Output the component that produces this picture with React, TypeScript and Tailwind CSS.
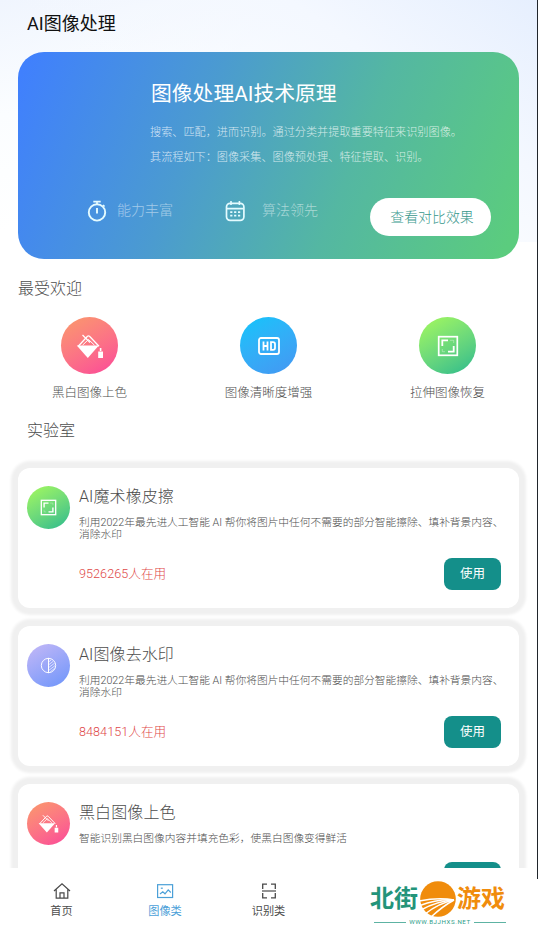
import React from "react";

type IconProps = { className?: string };

const BucketIcon = ({ className }: IconProps) => (
  <svg viewBox="0 0 28 28" className={className} fill="none" stroke="currentColor">
    <path d="M6.5 3L14 10.5" strokeWidth="1.3" />
    <path d="M2 14.5L11.5 4.3Q12.5 3.5 13.5 4.3L23 14.2" strokeWidth="1.3" />
    <path d="M0.8 13.5H22.8L11.8 26Z" fill="currentColor" stroke="none" />
    <path d="M6.5 13.2L12.5 7.5L18.5 13.2" strokeWidth="1" />
    <path d="M22.2 19.5H27V26H22.2ZM23.8 16h1.6v3h-1.6z" fill="currentColor" stroke="none" />
  </svg>
);

const HdIcon = ({ className }: IconProps) => (
  <svg viewBox="0 0 24 20" className={className} fill="none" stroke="currentColor">
    <rect x="2" y="2" width="20" height="16" rx="2" strokeWidth="1.8" />
    <path d="M6.5 5.5V14.5M10.5 5.5V14.5M6.5 10H10.5M14 6.2V13.8H16Q18 13.8 18 12V8Q18 6.2 16 6.2Z" strokeWidth="1.8" />
  </svg>
);

const StretchIcon = ({ className }: IconProps) => (
  <svg viewBox="0 0 22 22" className={className} fill="none" stroke="currentColor">
    <rect x="1.7" y="1.7" width="18.6" height="18.6" strokeWidth="1.7" />
    <path d="M5.3 11V5.3H11" strokeWidth="1.8" />
    <path d="M16.7 11V16.7H11" strokeWidth="1.8" />
    <path d="M13 5.3H16.7V8M5.3 14V16.7H8" strokeWidth="0.7" opacity="0.5" />
  </svg>
);

const HalfCircleIcon = ({ className }: IconProps) => (
  <svg viewBox="0 0 18 18" className={className} fill="none" stroke="currentColor">
    <circle cx="9" cy="9" r="7.6" strokeWidth="1" />
    <path d="M9 1V17" strokeWidth="1.1" />
    <path d="M9.5 5L12 3M9.5 8L14 4.5M9.5 11L15.5 6.5M9.5 14L16 9M11 15.5L15.5 12" strokeWidth="0.9" opacity="0.75" />
  </svg>
);

const StopwatchIcon = ({ className }: IconProps) => (
  <svg viewBox="0 0 20 22" className={className} fill="none" stroke="currentColor">
    <circle cx="10" cy="12.4" r="8.2" strokeWidth="1.9" />
    <path d="M6.3 1.6H13.7M10 8V13.5" strokeWidth="1.9" />
    <path d="M10 2V4.5M16 5L17.6 6.5" strokeWidth="1.6" />
  </svg>
);

const CalendarIcon = ({ className }: IconProps) => (
  <svg viewBox="0 0 20 22" className={className} fill="none" stroke="currentColor">
    <rect x="1.5" y="3.4" width="17.4" height="17" rx="3.6" strokeWidth="1.7" />
    <path d="M2 8.6H18.5M6 1V5M14.4 1V5" strokeWidth="1.6" />
    <path d="M5.2 12.2H15.2M5.2 15.6H15.2" strokeWidth="1.8" strokeDasharray="2.2 1.7" />
  </svg>
);

const HomeIcon = () => (
  <svg viewBox="0 0 18 18" className="size-[18px]" fill="none" stroke="#4a4a4a" strokeWidth="1.2">
    <path d="M1 9L9 1.7L17 9M3.2 7.2V16.2H14.8V7.2" />
    <path d="M7 16V10.8H11V16" />
  </svg>
);

const PictureIcon = () => (
  <svg viewBox="0 0 18 18" className="size-[18px]" fill="none" stroke="#4ba0d8" strokeWidth="1.2">
    <rect x="1.6" y="2.7" width="15" height="12.8" />
    <path d="M4 12L6.8 9.8L9 11.8L12.2 7.8L14.8 10.5" />
    <path d="M4.8 6.2H6.8" />
  </svg>
);

const ScanIcon = () => (
  <svg viewBox="0 0 18 18" className="size-[18px]" fill="none" stroke="#4a4a4a" strokeWidth="1.3">
    <path d="M7 2.2H2.7V7M11 2.2H15.3V7M2.7 11V15.8H7M15.3 11V15.8H11" />
    <path d="M2 9H16" strokeWidth="1.2" />
  </svg>
);

const popular = [
  { label: "黑白图像上色", bg: "from-[#fa9a69] to-[#fb4498]", icon: <BucketIcon className="size-7" /> },
  { label: "图像清晰度增强", bg: "from-[#08c5fb] to-[#4396f2]", icon: <HdIcon className="ml-[1px] h-5 w-6" /> },
  { label: "拉伸图像恢复", bg: "from-[#a5fa58] to-[#24ba8c]", icon: <StretchIcon className="size-[22px]" /> },
];

const eraseText = "利用2022年最先进人工智能 AI 帮你将图片中任何不需要的部分智能擦除、填补背景内容、消除水印";

const tools = [
  { title: "AI魔术橡皮擦", text: eraseText, users: "9526265人在用", action: "使用", bg: "from-[#a5fa58] to-[#24ba8c]", icon: <StretchIcon className="size-[17px]" /> },
  { title: "AI图像去水印", text: eraseText, users: "8484151人在用", action: "使用", bg: "from-[#c5b8f6] to-[#6c94fa]", icon: <HalfCircleIcon className="size-[17px]" /> },
  { title: "黑白图像上色", text: "智能识别黑白图像内容并填充色彩，使黑白图像变得鲜活", users: "", action: "", bg: "from-[#fa9a69] to-[#fb4498]", icon: <BucketIcon className="size-[21px]" /> },
];

const Watermark = () => (
  <div className="absolute left-[370px] top-[12px] w-[140px]">
    <div className="flex h-[38px] items-center whitespace-nowrap text-[24px] font-bold leading-[38px]">
      <span className="w-[49px] text-[#23947a]">北街</span>
      <svg viewBox="0 0 38 38" className="size-[38px] shrink-0">
        <circle cx="19" cy="19" r="17.8" fill="#f08c0c" />
        <g stroke="#fff" strokeWidth="1.5" fill="none">
          <path d="M0 21Q20 17 35 20" />
          <path d="M1 25.5Q18 19 35 20" />
          <path d="M2 30Q18 21 35 20" />
          <path d="M6 34Q20 23 35 20" />
          <path d="M12 37Q24 26 35 20" />
        </g>
      </svg>
      <span className="w-[49px] text-[#f08c0c]">游戏</span>
    </div>
    <div className="flex h-[9px] items-center gap-[3px] pl-1 pr-1">
      <span className="h-px flex-1 bg-[#5db3a3]" />
      <span className="text-[6.2px] leading-[9px] tracking-[0.55px] text-[#2f9d88]">WWW.BJJHXS.NET</span>
      <span className="h-px flex-1 bg-[#5db3a3]" />
    </div>
  </div>
);

export default function App() {
  return (
    <div className="flex h-[929px] w-[538px] flex-col overflow-hidden bg-white font-[Roboto,'Noto_Sans_CJK_SC',sans-serif] text-[#4d4d4d]">
      <div className="relative h-[868px] shrink-0 overflow-hidden bg-white">
        <div className="bg-[linear-gradient(165deg,#f0f5fe_0%,#fbfdff_30%,#ffffff_60%)]">
          <div className="h-[242px] bg-[linear-gradient(215deg,#e6effe_0%,#f4f8ff_28%,#ffffff00_60%)]">
            <header className="flex h-[52.4px] items-center pb-[5px] pl-[27px] text-[18px] text-[#111]">AI图像处理</header>
            <section className="mx-[18px] mr-[19px] h-[207px] rounded-[26px] bg-[linear-gradient(112deg,#4080fd_2%,#4b9bd0_36%,#54b7a2_65%,#5bcc7e_97%)] text-white">
              <div className="h-[67px] pl-[133px] pt-[26.6px] text-[20.8px] leading-[30px]">图像处理AI技术原理</div>
              <div className="pl-[132px] pt-[0.6px] text-[11.15px] font-light leading-[25px] text-white/75">
                <p>搜索、匹配，进而识别。通过分类并提取重要特征来识别图像。</p>
                <p>其流程如下：图像采集、图像预处理、特征提取、识别。</p>
              </div>
              <div className="flex pl-[69px] pt-[28px]">
                <div className="flex h-[26px] w-[138px] items-center text-[14px] font-light">
                  <StopwatchIcon className="mr-[10px] h-[22px] w-5 text-[#e4fbff]" />
                  <span className="text-white/50">能力丰富</span>
                </div>
                <div className="flex h-[26px] w-[145px] items-center text-[14px] font-light">
                  <CalendarIcon className="mr-[17px] h-[22px] w-5 text-[#e4fbff]" />
                  <span className="text-white/50">算法领先</span>
                </div>
                <button className="h-[38px] w-[121px] rounded-full bg-white pl-[3px] pt-[1px] text-[13.9px] font-light text-[#38988c]">查看对比效果</button>
              </div>
            </section>
          </div>
        </div>

        <h2 className="mt-[35px] pl-[18px] text-[16px] font-light leading-[24px]">最受欢迎</h2>
        <div className="mt-[16.4px] grid w-[537px] grid-cols-3">
          {popular.map((p) => (
            <div key={p.label} className="flex flex-col items-center">
              <div className={`flex size-[57px] items-center justify-center rounded-full bg-linear-150 text-white ${p.bg}`}>{p.icon}</div>
              <span className="mt-[10px] text-[12.5px] font-light leading-[18px]">{p.label}</span>
            </div>
          ))}
        </div>
        <h2 className="mt-[17px] pl-[27px] text-[16px] font-light leading-6">实验室</h2>

        <div className="mt-[24.6px] flex flex-col gap-[18px] pl-[18px] pr-[19px]">
          {tools.map((t) => (
            <article key={t.title} className="flex h-[140px] shrink-0 rounded-[12px] bg-white pl-[9px] pr-[18px] shadow-[0_0_3px_7px_#f0f0f0]">
              <div className={`mt-[18px] flex size-[43px] shrink-0 items-center justify-center rounded-full bg-linear-150 text-white ${t.bg}`}>{t.icon}</div>
              <div className="ml-[9px] flex flex-1 flex-col">
                <h3 className="mt-[17px] text-[16px] font-light leading-6 tracking-[0.1px]">{t.title}</h3>
                <p className="-mr-1 mb-[16.6px] mt-[8.4px] text-[10.72px] font-light leading-[12px]">{t.text}</p>
                <div className="flex h-8 items-center justify-between">
                  <span className="pt-[1px] text-[12.6px] font-light tracking-[0.05px] text-[#e04848]">{t.users}</span>
                  <button className="h-8 w-[57px] rounded-[8px] bg-[#148f8a] pt-[1px] text-[12.5px] text-white">{t.action}</button>
                </div>
              </div>
            </article>
          ))}
        </div>
        <div className="absolute right-0 top-0 h-full w-px bg-[#20252b]" />
      </div>

      <nav className="relative flex h-[61px] bg-white pl-[10px] text-[11.2px]">
        <div className="flex w-[103px] flex-col items-center pt-[14px]"><HomeIcon /><span className="mt-[2.5px] leading-[17px]">首页</span></div>
        <div className="flex w-[104px] flex-col items-center pt-[14px] text-[#4ba0d8]"><PictureIcon /><span className="mt-[2.5px] leading-[17px]">图像类</span></div>
        <div className="flex w-[103px] flex-col items-center pt-[14px]"><ScanIcon /><span className="mt-[2.5px] leading-[17px]">识别类</span></div>
        <Watermark />
        <div className="absolute right-0 top-0 h-[11px] w-px bg-[#20252b]" />
      </nav>
    </div>
  );
}
